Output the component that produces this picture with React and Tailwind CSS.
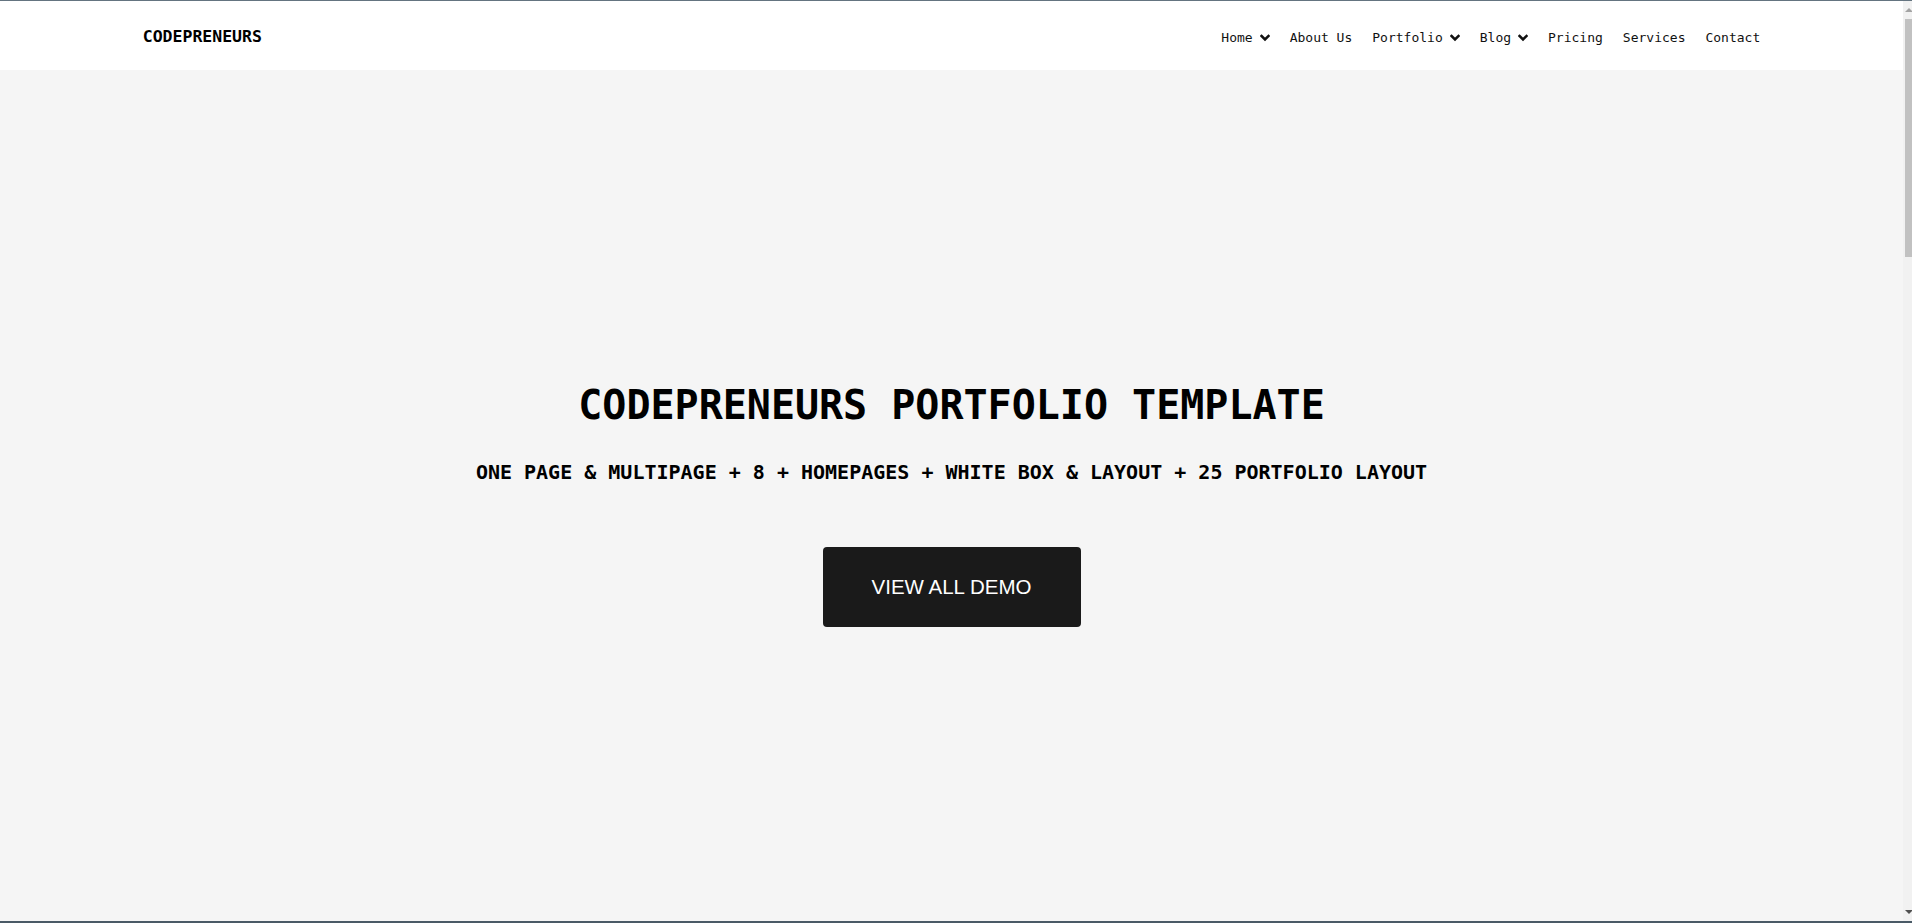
const navItems = [
  { label: "Home", caret: true },
  { label: "About Us" },
  { label: "Portfolio", caret: true },
  { label: "Blog", caret: true },
  { label: "Pricing" },
  { label: "Services" },
  { label: "Contact" },
];

function Caret() {
  return (
    <svg width="10" height="8" viewBox="0 0 10 8" className="ml-[7px]">
      <polyline
        points="1.5,2 5,5.5 8.5,2"
        fill="none"
        stroke="#111"
        strokeWidth="2.6"
        strokeLinecap="square"
      />
    </svg>
  );
}

function Scrollbar() {
  return (
    <div className="flex w-[9px] flex-col bg-[#f1f1f1] pl-[2px]">
      <div className="flex h-[18px] items-center justify-center">
        <div className="h-0 w-0 border-x-[4px] border-b-[4px] border-x-transparent border-b-[#a3a3a3]" />
      </div>
      <div className="h-[238px] bg-[#c1c1c1]" />
      <div className="flex-1" />
      <div className="flex h-[18px] items-center justify-center">
        <div className="h-0 w-0 border-x-[4px] border-t-[4px] border-x-transparent border-t-[#505050]" />
      </div>
    </div>
  );
}

export default function App() {
  return (
    <div className="flex h-[923px] flex-col overflow-hidden border-t border-b-2 border-t-[#647480] border-b-[#4a5a66]">
      <div className="flex min-h-0 flex-1">
        <div className="flex flex-1 flex-col">
          <header className="h-[69px] bg-white pt-[4px]">
            <div className="mx-auto flex h-full w-[85%] items-center justify-between">
              <a className="font-['DejaVu_Sans_Mono',monospace] text-[16.5px] font-bold text-black">
                CODEPRENEURS
              </a>
              <nav className="flex items-center gap-[20px] font-['DejaVu_Sans_Mono',monospace] text-[13px] text-[#111]">
                {navItems.map((item) => (
                  <a key={item.label} className="flex items-center">
                    {item.label}
                    {item.caret ? <Caret /> : null}
                  </a>
                ))}
              </nav>
            </div>
          </header>

          <section className="flex flex-1 flex-col items-center bg-[#f5f5f5] pt-[311px] text-center">
            <h1 className="font-['DejaVu_Sans_Mono',monospace] text-[40px] leading-[48px] font-bold text-black">
              CODEPRENEURS PORTFOLIO TEMPLATE
            </h1>
            <p className="mt-[29px] font-['DejaVu_Sans_Mono',monospace] text-[20px] leading-[28px] font-bold text-black">
              ONE PAGE &amp; MULTIPAGE + 8 + HOMEPAGES + WHITE BOX &amp; LAYOUT + 25 PORTFOLIO LAYOUT
            </p>
            <button className="mt-[61px] h-[80px] w-[258px] rounded-[4px] bg-[#1a1a1a] font-['Liberation_Sans',Arial,sans-serif] text-[20.5px] text-white">
              VIEW ALL DEMO
            </button>
          </section>
        </div>
        <Scrollbar />
      </div>
    </div>
  );
}
